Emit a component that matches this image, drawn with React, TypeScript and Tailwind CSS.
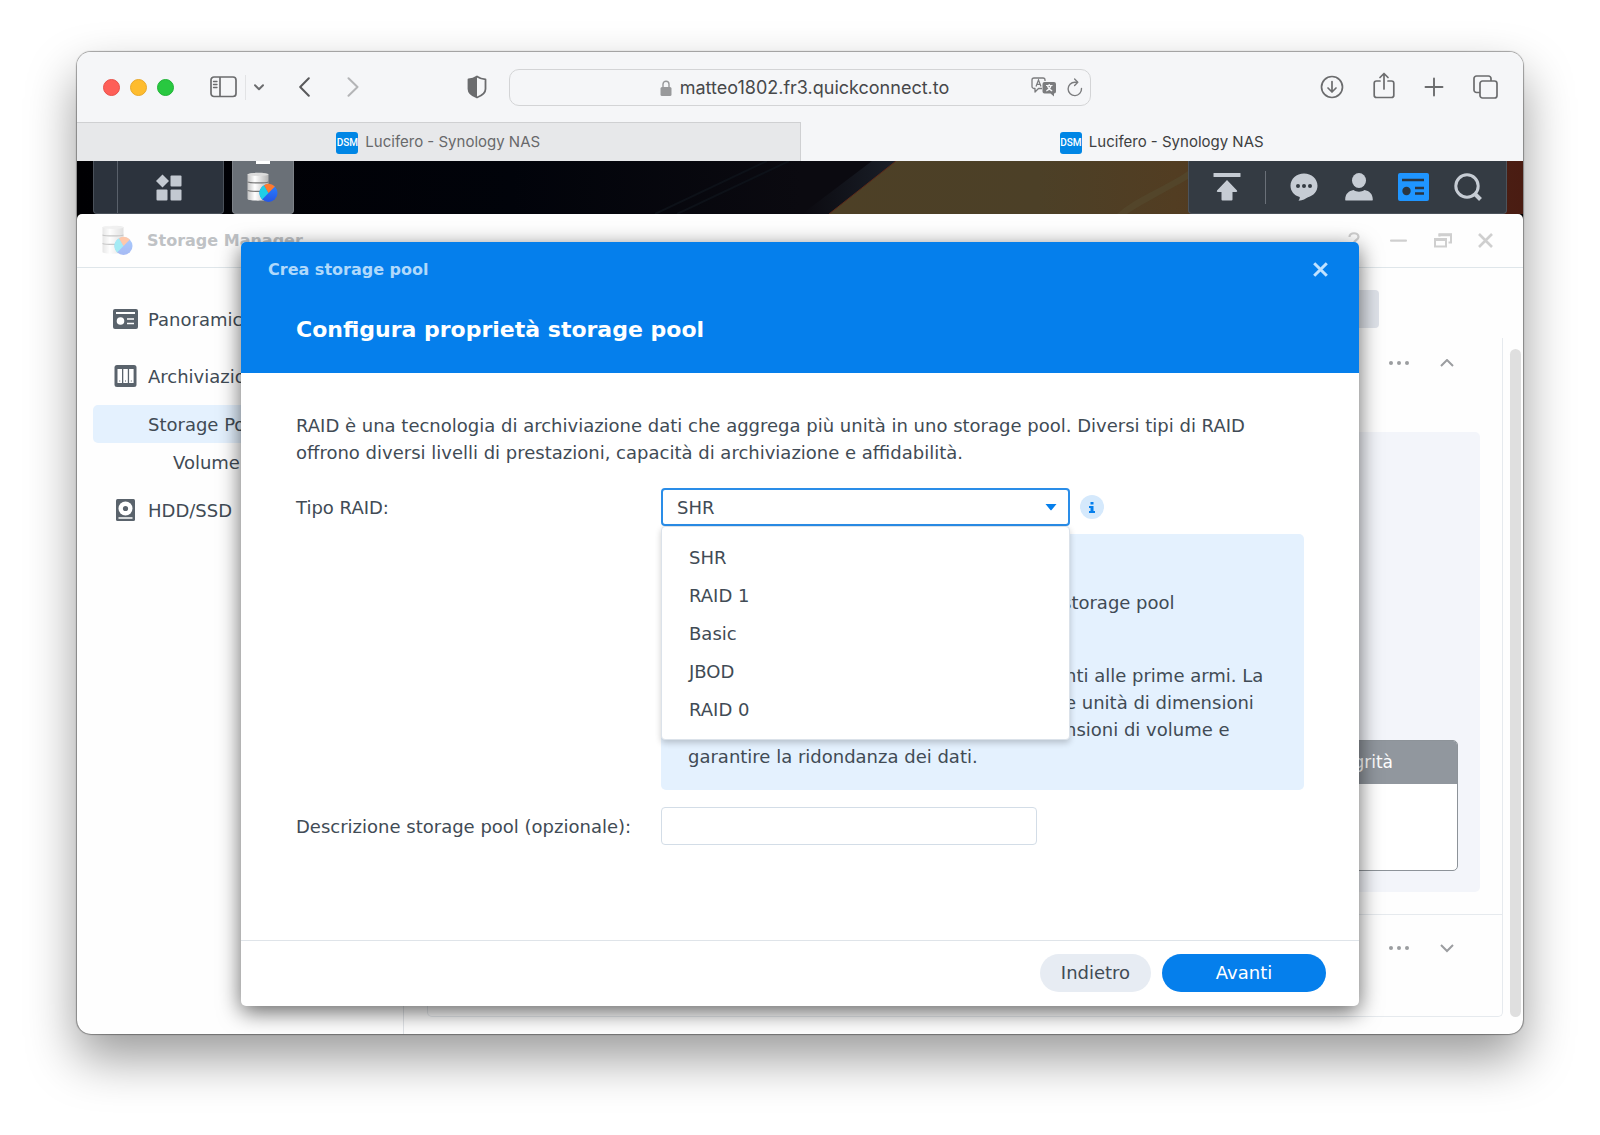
import { useState, type ReactNode } from 'react'

const raidTypes = ['SHR', 'RAID 1', 'Basic', 'JBOD', 'RAID 0']

/* ---------- browser chrome ---------- */

function Shield() {
  return (
    <svg width="20" height="24" viewBox="0 0 20 24" fill="none">
      <path d="M10 1.5C7.5 3.2 4.5 4.2 1.5 4.4V14c0 4 4.5 7 8.5 8.5 4-1.5 8.5-4.5 8.5-8.5V4.4C15.5 4.2 12.5 3.2 10 1.5Z" stroke="#6b6c6e" strokeWidth="1.8" strokeLinejoin="round" />
      <path d="M10 1.5C7.5 3.2 4.5 4.2 1.5 4.4V14c0 4 4.5 7 8.5 8.5Z" fill="#6b6c6e" />
    </svg>
  )
}

function BrowserToolbar() {
  return (
    <header className="grid h-[70px] grid-cols-[1fr_minmax(0,582px)_1fr] items-center bg-[#f5f6f8]">
      <div className="flex items-center pl-[26px] pr-[22px]">
        <div className="flex gap-[10px]">
          <button aria-label="Close window" className="size-[17px] rounded-full border border-[#e8504a] bg-[#fe5f58]" />
          <button aria-label="Minimize window" className="size-[17px] rounded-full border border-[#e9a92b] bg-[#febc2e]" />
          <button aria-label="Zoom window" className="size-[17px] rounded-full border border-[#1fb335] bg-[#28c840]" />
        </div>
        <button aria-label="Sidebar" className="ml-9">
          <svg width="27" height="22" viewBox="0 0 27 22" fill="none" stroke="#6b6c6e" strokeWidth="1.7">
            <rect x="1" y="1" width="25" height="19.5" rx="3" />
            <path d="M10 1v19.5" />
            <path d="M3.5 5.5h3.5M3.5 8.5h3.5M3.5 11.5h3.5" strokeWidth="1.3" strokeLinecap="round" />
          </svg>
        </button>
        <span className="ml-2 h-[25px] w-px bg-[#e2e3e5]" />
        <button aria-label="Tab groups" className="ml-2">
          <svg width="10" height="7" viewBox="0 0 10 7" fill="none" stroke="#6b6c6e" strokeWidth="2" strokeLinecap="round" strokeLinejoin="round">
            <path d="M1 1.2l4 4 4-4" />
          </svg>
        </button>
        <button aria-label="Back" className="ml-[35px]">
          <svg width="11" height="20" viewBox="0 0 11 20" fill="none" stroke="#59595b" strokeWidth="2" strokeLinecap="round" strokeLinejoin="round">
            <path d="M9.8 1.2L1.2 10l8.6 8.8" />
          </svg>
        </button>
        <button aria-label="Forward" className="ml-[37px]">
          <svg width="12" height="20" viewBox="0 0 12 20" fill="none" stroke="#b4b5b7" strokeWidth="2" strokeLinecap="round" strokeLinejoin="round">
            <path d="M1.5 1.2L10.5 10l-9 8.8" />
          </svg>
        </button>
        <button aria-label="Privacy report" className="ml-auto">
          <Shield />
        </button>
      </div>

      <div className="flex h-[37px] items-center rounded-[10px] border border-[#d3d4d6] pr-[7px]">
        <div className="flex flex-1 items-center justify-center gap-2 pl-[68px] pt-px">
          <svg width="12" height="16" viewBox="0 0 12 16" fill="none">
            <rect x="0.5" y="7" width="11" height="9" rx="1.5" fill="#98999b" />
            <path d="M3 7.5V4.2a3 3 0 0 1 6 0v3.3" stroke="#98999b" strokeWidth="1.4" />
          </svg>
          <span className="text-[18px] leading-6 text-[#47484a]">matteo1802.fr3.quickconnect.to</span>
        </div>
        <button aria-label="Translate">
          <svg width="26" height="20" viewBox="0 0 26 20" fill="none">
            <path d="M11 11.5H7.500L4 15v-3.500H3a2 2 0 0 1-2-2V3a2 2 0 0 1 2-2h9a2 2 0 0 1 2 2v1" stroke="#7b7c7e" strokeWidth="1.3" strokeLinejoin="round" />
            <path d="M5 9.5L7.5 3 10 9.5M5.9 7.3h3.2" stroke="#7b7c7e" strokeWidth="1.2" />
            <path d="M13.5 5H23a2 2 0 0 1 2 2v7.5a2 2 0 0 1-2 2v3L19.5 16.5h-6a2 2 0 0 1-2-2V7a2 2 0 0 1 2-2Z" fill="#7b7c7e" />
            <path d="M15 8.5h6.5M18.2 7v1.5M20 8.5c-.6 2.5-2.5 4.500-4.700 5.500M16.500 8.500c.6 2.500 2.500 4.500 4.700 5.500" stroke="#f5f6f8" strokeWidth="1.2" />
          </svg>
        </button>
        <button aria-label="Reload" className="ml-[10px]">
          <svg width="16" height="19" viewBox="0 0 16 19" fill="none" stroke="#7b7c7e" strokeWidth="1.4" strokeLinecap="round" strokeLinejoin="round">
            <path d="M14.5 10.5A6.7 6.7 0 1 1 7.8 4.2h2.4" />
            <path d="M7.6 1l3.2 3.2-3.2 3.2" />
          </svg>
        </button>
      </div>

      <div className="flex items-center justify-end pr-[25px]">
        <button aria-label="Downloads">
          <svg width="24" height="24" viewBox="0 0 24 24" fill="none" stroke="#6b6c6e" strokeWidth="1.7" strokeLinecap="round" strokeLinejoin="round">
            <circle cx="12" cy="12" r="10.5" />
            <path d="M12 6.5v10.5M8 13l4 4 4-4" />
          </svg>
        </button>
        <button aria-label="Share" className="ml-[29px] -mt-1">
          <svg width="22" height="27" viewBox="0 0 22 27" fill="none" stroke="#6b6c6e" strokeWidth="1.7" strokeLinecap="round" strokeLinejoin="round">
            <path d="M7 9H3.5A2.3 2.3 0 0 0 1.2 11.3v11.9a2.3 2.3 0 0 0 2.3 2.3h15a2.3 2.3 0 0 0 2.3-2.3V11.3A2.3 2.3 0 0 0 18.5 9H15" />
            <path d="M11 17V1.5M7 5.5l4-4 4 4" />
          </svg>
        </button>
        <button aria-label="New tab" className="ml-[29px]">
          <svg width="20" height="20" viewBox="0 0 20 20" fill="none" stroke="#6b6c6e" strokeWidth="1.9" strokeLinecap="round">
            <path d="M10 1.5v17M1.5 10h17" />
          </svg>
        </button>
        <button aria-label="Tab overview" className="ml-[29px]">
          <svg width="25" height="24" viewBox="0 0 25 24" fill="none" stroke="#6b6c6e" strokeWidth="1.7" strokeLinejoin="round">
            <path d="M7 17.5H3.5A2.5 2.5 0 0 1 1 15V3.5A2.5 2.5 0 0 1 3.5 1h12A2.5 2.5 0 0 1 18 3.5V6" />
            <rect x="7" y="6" width="17" height="17" rx="2.5" />
          </svg>
        </button>
      </div>
    </header>
  )
}

function BrowserTab({ active }: { active?: boolean }) {
  return (
    <button
      role="tab"
      aria-selected={!!active}
      className={
        active
          ? 'flex flex-1 items-center justify-center gap-[7px] border-t border-[#f5f6f8] bg-[#f5f6f8] pt-px text-[#3e3f41]'
          : 'flex flex-1 items-center justify-center gap-[7px] border-t border-r border-[#cfd0d2] bg-[#e7e8ea] pt-px text-[#68696b]'
      }
    >
      <span className="flex size-[22px] items-center justify-center rounded-[3px] bg-[#0086e5] font-['Roboto',sans-serif] text-[10px] font-medium text-white">
        DSM
      </span>
      <span className="text-[15px]">Lucifero - Synology NAS</span>
    </button>
  )
}

/* ---------- DSM desktop ---------- */

function StorageIcon({ id, faded }: { id: string; faded?: boolean }) {
  return (
    <svg width="31" height="31" viewBox="0 0 31 31" className={faded ? 'opacity-40' : ''}>
      <defs>
        <linearGradient id={`${id}-metal`} x1="0" x2="1">
          <stop offset="0" stopColor="#c4c4c4" />
          <stop offset="0.35" stopColor="#ffffff" />
          <stop offset="1" stopColor="#b4b4b4" />
        </linearGradient>
        <linearGradient id={`${id}-blue`} x1="0" x2="0" y1="0" y2="1">
          <stop offset="0" stopColor="#2b83ff" />
          <stop offset="1" stopColor="#2456e6" />
        </linearGradient>
      </defs>
      <path d="M0.500 2.500c0-2.200 21-2.200 21 0v24.500c0 2.200-21 2.200-21 0Z" fill={`url(#${id}-metal)`} />
      <ellipse cx="11" cy="2.500" rx="10.500" ry="1.400" fill="#dcdcdc" />
      <path d="M0.500 10c3 1.200 18 1.200 21 0M0.500 18.500c3 1.200 18 1.200 21 0" fill="none" stroke="#777" strokeWidth="1.1" />
      <circle cx="21.500" cy="21" r="9" fill={`url(#${id}-blue)`} />
      <path d="M21.500 21L15.100 27.400A9 9 0 0 1 17 13.200Z" fill="#1fcfe6" />
      <path d="M21.500 21L17 13.200A9 9 0 0 1 27.900 14.600Z" fill="#ff7a2e" />
    </svg>
  )
}

function Wallpaper() {
  return (
    <svg className="absolute inset-0 size-full" viewBox="0 0 1446 53" preserveAspectRatio="none">
      <defs>
        <linearGradient id="night" x1="0" x2="1">
          <stop offset="0" stopColor="#000003" />
          <stop offset="0.3" stopColor="#01030a" />
          <stop offset="0.5" stopColor="#0b0a10" />
        </linearGradient>
        <linearGradient id="sand" x1="0" x2="1">
          <stop offset="0" stopColor="#4d4026" />
          <stop offset="0.3" stopColor="#4c4027" />
          <stop offset="0.5" stopColor="#523d22" />
          <stop offset="1" stopColor="#4a1c12" />
        </linearGradient>
        <linearGradient id="edge" x1="0" x2="1">
          <stop offset="0" stopColor="#0b0a10" />
          <stop offset="1" stopColor="#1a1f28" />
        </linearGradient>
      </defs>
      <rect width="1446" height="53" fill="url(#night)" />
      <path d="M578 53L690 0M600 53L712 0" stroke="#0d1118" strokeWidth="2" />
      <path d="M725 53L795 0h24L752 53Z" fill="url(#edge)" />
      <path d="M752 53L819 0H1446V53Z" fill="url(#sand)" />
      <path d="M752 53L819 0" stroke="#5c2a1a" strokeWidth="1" />
      <path d="M1040 53C1060 35 1090 25 1111 10V18C1090 30 1070 40 1050 53Z" fill="#53452a" />
    </svg>
  )
}

function Taskbar() {
  return (
    <div className="relative h-[53px] overflow-hidden bg-black">
      <Wallpaper />
      <div className="relative flex h-[53px] px-4">
        <div className="flex w-[131px] rounded-b-[4px] border-x border-b border-[#4a515a] bg-[#2c333d]">
          <span className="w-[24px] border-r border-[#59606a]" />
          <button aria-label="Main menu" className="flex flex-1 items-center justify-center pr-1">
            <svg width="26" height="27" viewBox="0 0 26 27" fill="#c3c9d1">
              <path d="M6.5 0.5L13 7 6.5 13.5 0 7Z" />
              <rect x="14.5" y="1.5" width="11" height="11" rx="1" />
              <rect x="0.5" y="15.5" width="11" height="11" rx="1" />
              <rect x="14.5" y="15.5" width="11" height="11" rx="1" />
            </svg>
          </button>
        </div>
        <button
          aria-label="Storage Manager"
          className="ml-2 flex w-[62px] flex-col items-center rounded-b-[4px] border-x border-b border-[#7d8288] bg-[#6a7077]"
        >
          <span className="h-[3px] w-[14px] bg-white" />
          <span className="mt-2 pr-[2px]">
            <StorageIcon id="task" />
          </span>
        </button>

        <div className="ml-auto flex items-center rounded-b-[4px] border-x border-b border-[#4c535b] bg-[#343b43] px-[24px]">
          <button aria-label="Upload queue">
            <svg width="28" height="28" viewBox="0 0 28 28" fill="#c6ccd4">
              <rect x="0.5" y="0" width="27" height="4" rx="0.5" />
              <path d="M14 7L24 17.5a1 1 0 0 1-.8 1.5H19.5v7.5a1 1 0 0 1-1 1h-9a1 1 0 0 1-1-1V19H4.8A1 1 0 0 1 4 17.5Z" />
            </svg>
          </button>
          <span className="ml-6 h-[33px] w-px bg-[#6a7078]" />
          <button aria-label="Notifications" className="ml-[24px]">
            <svg width="28" height="28" viewBox="0 0 28 28">
              <path d="M14 0.5c7.5 0 13.5 5.3 13.5 12.2 0 5.5-4 10-9.5 11.500-2.500 1.500-5 3-9.500 3.500 1-1.500 1.500-2.500 1.200-3.700C4.300 22.500 0.500 18.200 0.500 12.700 0.500 5.800 6.500 0.500 14 0.500Z" fill="#c6ccd4" />
              <circle cx="8" cy="13" r="2" fill="#343b43" />
              <circle cx="14" cy="13" r="2" fill="#343b43" />
              <circle cx="20" cy="13" r="2" fill="#343b43" />
            </svg>
          </button>
          <button aria-label="User" className="ml-[27px]">
            <svg width="28" height="28" viewBox="0 0 28 28" fill="#c6ccd4">
              <ellipse cx="14" cy="7.5" rx="7" ry="7.5" />
              <path d="M1 27.5c-.6 0-.8-.4-.8-1C.2 20.500 4 18 8.500 17c3 2.200 8 2.200 11 0 4.500 1 8.300 3.500 8.300 9.500 0 .6-.2 1-.8 1Z" />
            </svg>
          </button>
          <button aria-label="Widgets" className="ml-[25px]">
            <svg width="31" height="28" viewBox="0 0 31 28">
              <rect width="31" height="28" rx="2" fill="#1f95ff" />
              <path d="M4 7h22" stroke="#2b3540" strokeWidth="2.5" />
              <circle cx="8.5" cy="18" r="4.2" fill="#2b3540" />
              <path d="M17 15h9M17 20.500h9" stroke="#2b3540" strokeWidth="2.5" />
            </svg>
          </button>
          <button aria-label="Search" className="ml-[25px]">
            <svg width="28" height="28" viewBox="0 0 28 28" fill="none" stroke="#c6ccd4">
              <circle cx="13" cy="13" r="11.2" strokeWidth="3" />
              <path d="M21 21l5.500 5.500" strokeWidth="4" />
            </svg>
          </button>
        </div>
      </div>
    </div>
  )
}

/* ---------- Storage Manager window ---------- */

function NavItem({ icon, label, active, nested }: { icon?: ReactNode; label: string; active?: boolean; nested?: boolean }) {
  return (
    <a
      href="#"
      aria-current={active ? 'page' : undefined}
      className={`flex h-[38px] items-center rounded-[5px] ${nested ? 'pl-20' : 'pl-[19px]'} ${active ? 'bg-[#e4f1fe]' : ''}`}
    >
      {!nested && <span className="flex w-9">{icon}</span>}
      {label}
    </a>
  )
}

function SideNav() {
  return (
    <nav className="w-[327px] shrink-0 border-r border-[#e1e4e8] px-4 pt-8 text-[18px] text-[#414b55]">
      <NavItem
        label="Panoramica"
        icon={
          <svg width="27" height="22" viewBox="0 0 27 22">
            <rect x="1" y="1" width="25" height="20" rx="2" fill="#5a636c" />
            <path d="M4 5h19" stroke="#fff" strokeWidth="2" />
            <circle cx="8.5" cy="13" r="3.8" fill="#fff" />
            <path d="M15 11h7M15 15.5h7" stroke="#fff" strokeWidth="1.5" />
          </svg>
        }
      />
      <div className="mt-[19px]">
        <NavItem
          label="Archiviazione"
          icon={
            <svg width="27" height="22" viewBox="0 0 27 22">
              <rect x="2.5" y="0" width="22" height="22" rx="2.5" fill="#5a636c" />
              <path d="M5.5 4h4.5v14H5.5ZM11.3 4h4.5v14h-4.5ZM17.1 4h4.5v14h-4.5Z" fill="#fff" />
              <path d="M7.2 16h1M13 16h1M18.8 16h1" stroke="#5a636c" />
            </svg>
          }
        />
      </div>
      <div className="mt-[10px]">
        <NavItem label="Storage Pool" active />
        <NavItem label="Volume" nested />
      </div>
      <div className="mt-[10px]">
        <NavItem
          label="HDD/SSD"
          icon={
            <svg width="27" height="22" viewBox="0 0 27 22">
              <rect x="4" y="0" width="19" height="22" rx="1.5" fill="#5a636c" />
              <circle cx="13.5" cy="9.5" r="7" fill="#fff" />
              <circle cx="13.5" cy="9.5" r="2.6" fill="#5a636c" />
              <path d="M6.5 19h14" stroke="#fff" strokeWidth="1.5" />
            </svg>
          }
        />
      </div>
    </nav>
  )
}

function PoolActions({ open }: { open?: boolean }) {
  return (
    <div className="flex h-[50px] items-center justify-end gap-[30px] pr-12">
      <button aria-label="More">
        <svg width="22" height="6" viewBox="0 0 22 6" fill="#9b9da0">
          <circle cx="3" cy="3" r="2" />
          <circle cx="11" cy="3" r="2" />
          <circle cx="19" cy="3" r="2" />
        </svg>
      </button>
      <button aria-label={open ? 'Collapse' : 'Expand'}>
        <svg width="14" height="9" viewBox="0 0 14 9" fill="none" stroke="#9b9da0" strokeWidth="2">
          <path d={open ? 'M1 7l6-6 6 6' : 'M1 1l6 6 6-6'} />
        </svg>
      </button>
    </div>
  )
}

function PoolContent() {
  return (
    <div className="flex flex-1 flex-col pl-[23px] pr-[2px] pt-[22px] pb-[17px]">
      <div className="ml-[600px] mr-[142px] h-[38px] shrink-0 rounded-[4px] bg-[#dfe3ea]" />
      <div className="mt-[10px] flex flex-1 gap-[7px]">
        <section className="flex flex-1 flex-col rounded-b-[5px] border-x border-b border-[#e6eaee]">
          <PoolActions open />
          <div className="mx-[22px] mt-[44px] mb-[22px] flex flex-1 flex-col justify-end rounded-[5px] bg-[#f3f5fa] px-[22px] pb-[21px]">
            <div className="overflow-hidden rounded-[5px] border border-[#8d9399] bg-white">
              <table className="w-full text-[17px]">
                <thead>
                  <tr className="h-[43px] bg-[#91979e] text-white">
                    <th className="pr-16 text-right font-normal">Integrità</th>
                  </tr>
                </thead>
                <tbody>
                  <tr className="h-[86px]">
                    <td />
                  </tr>
                </tbody>
              </table>
            </div>
          </div>
          <div className="h-[102px] border-t border-[#e6eaee] pt-2">
            <PoolActions />
          </div>
        </section>
        <div className="mt-[11px] w-[11px] rounded-full bg-[#dfdfdf]" />
      </div>
    </div>
  )
}

/* ---------- wizard ---------- */

function PoolWizard() {
  const [raid, setRaid] = useState('SHR')

  return (
    <div
      role="dialog"
      aria-labelledby="wizard-title"
      className="absolute inset-x-[164px] inset-y-7 flex flex-col overflow-hidden rounded-[5px] bg-white text-[18px] leading-[27px] text-[#414b55] shadow-[0_6px_22px_rgba(0,0,0,0.6)]"
    >
      <div className="h-[131px] bg-[#057fec] pl-[27px] pr-[31px] pt-[14px]">
        <div className="flex items-center justify-between">
          <h1 id="wizard-title" className="text-[16px] font-bold text-[#b0d9fb]">
            Crea storage pool
          </h1>
          <button aria-label="Chiudi">
            <svg width="15" height="15" viewBox="0 0 15 15" stroke="#c0e2ff" strokeWidth="3">
              <path d="M1.2 1.2l12.6 12.6M13.8 1.2L1.2 13.8" />
            </svg>
          </button>
        </div>
        <h2 className="mt-[33px] pl-7 text-[22px] font-bold text-white">Configura proprietà storage pool</h2>
      </div>

      <div className="flex-1 px-[55px] pt-[39px]">
        <p>
          RAID è una tecnologia di archiviazione dati che aggrega più unità in uno storage pool. Diversi tipi di RAID
          offrono diversi livelli di prestazioni, capacità di archiviazione e affidabilità.
        </p>

        <div className="mt-[22px] grid grid-cols-[365px_1fr]">
          <label htmlFor="raid" className="flex h-[38px] items-center">
            Tipo RAID:
          </label>
          <div className="flex items-center gap-[10px]">
            <div className="relative w-[409px]">
              <select
                id="raid"
                value={raid}
                onChange={(e) => setRaid(e.target.value)}
                className="h-[38px] w-full appearance-none rounded-[4px] border-2 border-[#2a8de8] bg-white pl-[14px]"
              >
                {raidTypes.map((type) => (
                  <option key={type}>{type}</option>
                ))}
              </select>
              <svg className="pointer-events-none absolute right-[13px] top-4" width="12" height="7" viewBox="0 0 12 7" fill="#057fec">
                <path d="M0.5 0h11L6.8 5.700a1 1 0 0 1-1.6 0Z" />
              </svg>
              <ul
                role="listbox"
                aria-label="Tipo RAID"
                className="absolute inset-x-0 top-full z-10 rounded-[4px] border border-[#dbe2ea] bg-white py-[11px] shadow-[0_3px_6px_rgba(0,0,0,0.2)]"
              >
                {raidTypes.map((type) => (
                  <li
                    key={type}
                    role="option"
                    aria-selected={type === raid}
                    onClick={() => setRaid(type)}
                    className="flex h-[38px] items-center pl-[27px]"
                  >
                    {type}
                  </li>
                ))}
              </ul>
            </div>
            <button aria-label="Informazioni" className="flex size-6 items-center justify-center rounded-full bg-[#d5e9fc]">
              <svg width="8" height="11" viewBox="0 0 8 11" fill="#057fec">
                <rect x="2.5" y="0" width="3" height="2.5" />
                <path d="M1 4h4.5V9H7v2H1V9H2.5V6H1Z" />
              </svg>
            </button>
          </div>

          <div className="col-start-2 mt-2 rounded-[5px] bg-[#e4f1fe] px-[27px] pt-[55px] pb-5">
            <p className="pl-[374px]">storage pool</p>
            <p className="mt-[46px] pl-[377px] whitespace-nowrap">
              nti alle prime armi. La
              <br />e unità di dimensioni
              <br />
              nsioni di volume e
            </p>
            <p>garantire la ridondanza dei dati.</p>
          </div>

          <label htmlFor="description" className="mt-[17px] flex h-[38px] items-center">
            Descrizione storage pool (opzionale):
          </label>
          <input
            id="description"
            type="text"
            className="mt-[17px] h-[38px] w-[376px] rounded-[4px] border border-[#d3dde7] bg-white px-3"
          />
        </div>
      </div>

      <div className="flex h-[66px] items-center justify-end gap-[11px] border-t border-[#dfe4e9] pr-[33px] pb-[2px]">
        <button className="h-[38px] w-[111px] rounded-full bg-[#e7ecf3]">Indietro</button>
        <button className="h-[38px] w-[164px] rounded-full bg-[#057fec] text-white">Avanti</button>
      </div>
    </div>
  )
}

function StorageManager() {
  return (
    <div className="flex flex-1 flex-col bg-black">
      <div className="relative flex flex-1 flex-col rounded-t-[5px] bg-[#fefefe]">
        <div className="flex h-[54px] items-center border-b border-[#dfe6ea] pl-[25px] pr-[30px]">
          <StorageIcon id="window" faded />
          <span className="ml-[14px] text-[16px] font-bold text-[#bfc2c5]">Storage Manager</span>
          <div className="ml-auto flex items-center text-[#cfcfcf]">
            <button aria-label="Help">
              <svg width="12" height="17" viewBox="0 0 12 17" fill="none" stroke="currentColor" strokeWidth="2.2">
                <path d="M1.500 5c0-5 9-5 9 0 0 3-4.500 3-4.500 6M6 13v2.500" />
              </svg>
            </button>
            <button aria-label="Minimize" className="ml-[30px]">
              <svg width="17" height="3" viewBox="0 0 17 3" fill="currentColor">
                <rect y="0.500" width="17" height="2.300" rx="1" />
              </svg>
            </button>
            <button aria-label="Restore" className="ml-[27px]">
              <svg width="18" height="15" viewBox="0 0 18 15" fill="none" stroke="currentColor">
                <rect x="1" y="6" width="11" height="7.5" strokeWidth="2" />
                <path d="M0 6.500h13" strokeWidth="3" />
                <path d="M5.500 3.500V1.800H17V9.500H14.500" strokeWidth="2" />
                <path d="M4.500 1.800H18" strokeWidth="3" />
              </svg>
            </button>
            <button aria-label="Close" className="ml-[26px]">
              <svg width="15" height="15" viewBox="0 0 15 15" stroke="currentColor" strokeWidth="2.6">
                <path d="M1 1l13 13M14 1L1 14" />
              </svg>
            </button>
          </div>
        </div>
        <div className="flex flex-1">
          <SideNav />
          <PoolContent />
        </div>
        <PoolWizard />
      </div>
    </div>
  )
}

export default function App() {
  return (
    <div className="flex min-h-screen flex-col bg-white px-[77px] pt-[52px] pb-[101px]">
      <div className="flex flex-1 rounded-[14px] shadow-[0_0_1px_1px_rgba(0,0,0,0.35),0_24px_50px_rgba(0,0,0,0.4)]">
        <div className="flex flex-1 flex-col overflow-hidden rounded-[14px] font-['Inter',sans-serif]">
          <BrowserToolbar />
          <div role="tablist" className="flex h-[39px]">
            <BrowserTab />
            <BrowserTab active />
          </div>
          <div className="flex flex-1 flex-col font-['DejaVu_Sans',sans-serif]">
            <Taskbar />
            <StorageManager />
          </div>
        </div>
      </div>
    </div>
  )
}
